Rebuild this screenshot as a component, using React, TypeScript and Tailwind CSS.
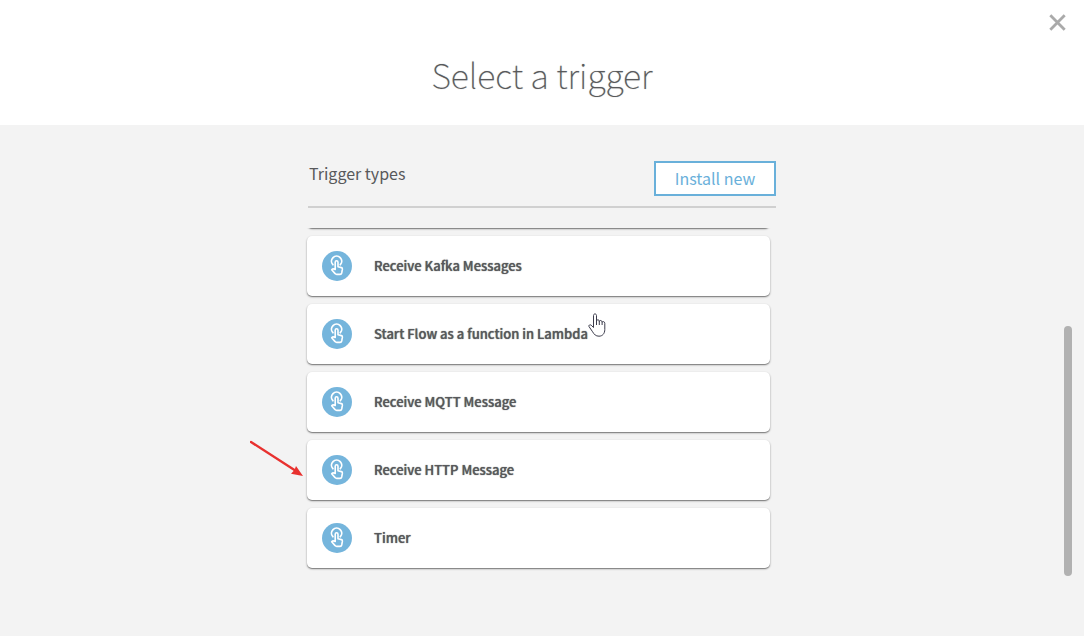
const triggers = [
  'Receive Kafka Messages',
  'Start Flow as a function in Lambda',
  'Receive MQTT Message',
  'Receive HTTP Message',
  'Timer',
];

const cardStyle =
  'flex h-15 w-full items-center rounded-[5px] bg-white text-left shadow-[0_1px_2px_rgba(0,0,0,0.45),0_1px_0_rgba(0,0,0,0.15)]';

function TouchIcon() {
  return (
    <svg viewBox="0 0 30 30" className="size-[30px] shrink-0" aria-hidden="true">
      <circle cx="15" cy="15" r="15" fill="#75b5dc" />
      <path
        d="M10.9 13.7A5.1 5.1 0 1 1 18.3 13.7"
        fill="none"
        stroke="#fff"
        strokeWidth="1.8"
        strokeLinecap="round"
      />
      <path
        d="M13.2 18.5V11.2a1.4 1.4 0 0 1 2.8 0V15.8l3.4.8c.8.2 1.1.8 1 1.6l-.7 3.8c-.2.9-.7 1.4-1.6 1.4h-3.4c-.7 0-1.2-.3-1.6-.8l-3.4-3.9c.8-1 2-1.1 3.5-.2z"
        fill="none"
        stroke="#fff"
        strokeWidth="1.6"
        strokeLinejoin="round"
      />
    </svg>
  );
}

function HandCursor() {
  return (
    <svg viewBox="0 0 18 24" className="pointer-events-none absolute top-[9px] left-[281px] h-6 w-[18px]" aria-hidden="true">
      <path
        d="M5.5 14.5V2.5C5.5.4 8.5.4 8.5 2.5V8C8.5 6.4 11.3 6.4 11.3 8.3C11.6 7 14.1 7.2 14.1 9.2C14.6 8.1 16.8 8.4 16.8 10.3V16.5C16.8 20.5 14.5 23.2 11 23.2C7.7 23.2 6.2 21.4 4.6 18.8L1 13.6C.3 12.3 2 11.2 3.2 12.2Z"
        fill="#fff"
        stroke="#3c3c4c"
        strokeWidth="1"
        strokeLinejoin="round"
      />
      <path d="M8.5 7.5V12M11.3 8V12M14.1 9V12" stroke="#3c3c4c" strokeWidth="1" />
    </svg>
  );
}

function Arrow() {
  return (
    <svg viewBox="0 0 54 36" className="pointer-events-none h-9 w-[54px]" aria-hidden="true">
      <path d="M1 2L46 31" stroke="#e8312f" strokeWidth="2.4" strokeLinecap="round" />
      <path d="M53 36L41 33.8L44.5 30L46 26Z" fill="#e8312f" />
    </svg>
  );
}

export default function App() {
  return (
    <div className="relative flex min-h-screen flex-col bg-[#f3f3f3] font-['Noto_Sans_CJK_JP',sans-serif] text-[#58595b]">
      <header className="relative flex h-[125px] items-center justify-center bg-white pt-6">
        <h1 className="text-[34px] leading-[44px] font-thin text-shadow-[0_0_1px_#9a9b9d]">Select a trigger</h1>
        <button type="button" aria-label="Close" className="absolute top-3.5 right-[18px]">
          <svg viewBox="0 0 17 17" className="size-[17px]" aria-hidden="true">
            <path d="M1.3 1.3L15.7 15.7M15.7 1.3L1.3 15.7" stroke="#aaa" strokeWidth="2.8" />
          </svg>
        </button>
      </header>

      <main className="mx-auto w-full max-w-[468px] pt-9">
        <div className="flex h-[47px] items-start justify-between border-b-2 border-[#d0d0d0]">
          <h2 className="pl-px text-base leading-6">Trigger types</h2>
          <button
            type="button"
            className="h-[35px] w-[122px] border-2 border-[#69b0da] bg-white text-base leading-[31px] text-[#69b0da]"
          >
            Install new
          </button>
        </div>

        <div className="mt-5 -ml-1 overflow-hidden pr-1.5 pb-4 pl-[3px]">
          <div className={`${cardStyle} -mt-15`} aria-hidden="true" />
          <ul className="mt-2 flex flex-col gap-2">
            {triggers.map((name) => (
              <li key={name} className="relative">
                <button type="button" className={`${cardStyle} gap-[22px] px-[15px]`}>
                  <TouchIcon />
                  <span className="text-[13px] leading-5 font-medium text-shadow-[0_0_1px_#58595b]">{name}</span>
                </button>
                {name.includes('Lambda') && <HandCursor />}
              </li>
            ))}
          </ul>
        </div>
      </main>

      <div className="absolute top-[326px] right-3 h-[250px] w-2 rounded-full bg-[#b1b1b1]" />
      <div className="absolute top-[440px] left-1/2 -ml-[292px]">
        <Arrow />
      </div>
    </div>
  );
}
